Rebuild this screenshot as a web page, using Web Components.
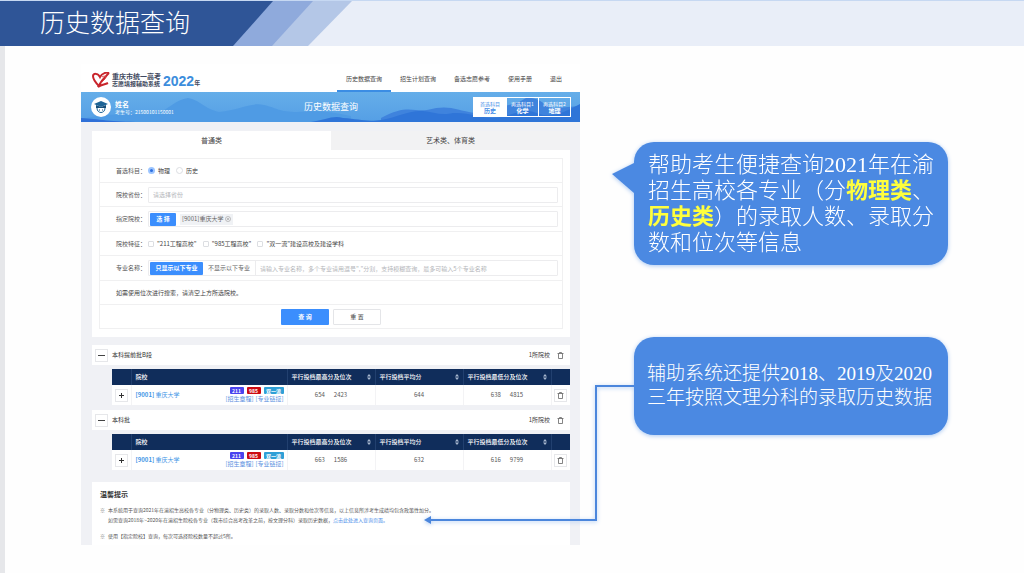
<!DOCTYPE html>
<html lang="zh-CN">
<head>
<meta charset="utf-8">
<title>历史数据查询</title>
<style>
  html, body { margin: 0; background: #fefefe; }
  body { font-family: "Noto Sans CJK SC", sans-serif; color: #444; }
</style>
</head>
<body>
<guide-slide>
  <slide-title slot="title">历史数据查询</slide-title>
  <query-site slot="demo"></query-site>
  <call-out slot="notes" kind="bubble">帮助考生便捷查询2021年在渝招生高校各专业（分<b>物理类</b>、<b>历史类</b>）的录取人数、录取分数和位次等信息</call-out>
  <call-out slot="notes" kind="linked">辅助系统还提供2018、2019及2020三年按照文理分科的录取历史数据</call-out>
</guide-slide>

<script>
const base = `<style>
  *, *::before, *::after { box-sizing: border-box; }
  button, input { font: inherit; color: inherit; margin: 0; padding: 0; }
  a { color: inherit; text-decoration: none; }
  svg { display: block; }
</style>`;

function define(name, render) {
  customElements.define(name, class extends HTMLElement {
    constructor() {
      super();
      this.attachShadow({ mode: 'open' });
    }
    connectedCallback() {
      const t = document.createElement('template');
      t.innerHTML = base + render(this);
      this.shadowRoot.replaceChildren(t.content.cloneNode(true));
    }
  });
}

/* Slide frame: title band, demo on the left, notes on the right */
define('guide-slide', () => `
<style>
  :host { display: flex; flex-direction: column; min-height: 100vh; box-sizing: border-box; }
  main {
    flex: 1; display: grid; grid-template-columns: 499fr 314fr; column-gap: 54px;
    align-items: start; padding: 18px 76px 0 76px; border-left: 5px solid #e6e7ea;
  }
  .notes { display: flex; flex-direction: column; gap: 72px; padding-top: 78px; }
</style>
<slot name="title"></slot>
<main>
  <slot name="demo"></slot>
  <div class="notes"><slot name="notes"></slot></div>
</main>`);

define('slide-title', () => `
<style>
  :host { display: block; position: relative; height: 46px; background: #e9eef8; border-top: 1px solid #c6d8f2; box-sizing: border-box; }
  svg { position: absolute; left: 0; top: 0; }
  h1 { position: relative; margin: 0; padding-left: 40px; font-size: 25px; line-height: 40px; font-weight: 300; color: #fff; }
</style>
<svg width="352" height="45" viewBox="0 0 352 45" aria-hidden="true">
  <path d="M0 0H352L308 45H0Z" fill="#b4c7e7"/>
  <path d="M0 0H313L272 45H0Z" fill="#8faadc"/>
  <path d="M0 0H273L233 45H0Z" fill="#2f5597"/>
</svg>
<h1><slot></slot></h1>`);

define('call-out', el => {
  const bubble = el.getAttribute('kind') === 'bubble';
  return `
<style>
  :host {
    display: flex; align-items: center; position: relative; box-sizing: border-box;
    border-radius: 20px; background: #4b89e2; color: #fff; font-weight: 300;
    font-family: "Liberation Serif", "Noto Sans CJK SC", serif;
    filter: drop-shadow(0 1px 2px #a9c8f2);
  }
  :host([kind=bubble]) { min-height: 123px; padding: 0 8px 0 14px; font-size: 22px; line-height: 26px; }
  :host([kind=linked]) { min-height: 98px; padding: 0 13px; font-size: 19px; line-height: 24px; }
  ::slotted(b) { color: #ffff3c; font-weight: 700; }
  svg { position: absolute; right: 100%; }
  .tail { top: 20px; }
  .wire { top: 48px; }
</style>
${bubble
  ? `<svg class="tail" width="22" height="32" viewBox="0 0 22 32" aria-hidden="true"><path d="M22 1L0 12L22 31Z" fill="#4b89e2"/></svg>`
  : `<svg class="wire" width="210" height="140" viewBox="0 0 210 140" aria-hidden="true"><path d="M210 1H172V135H6" fill="none" stroke="#4b86dc" stroke-width="2"/><path d="M0 135L7 131V139Z" fill="#4b86dc"/></svg>`}
<div><slot></slot></div>`;
});

/* The query site shown in the slide */
define('query-site', () => `
<style>
  :host { display: block; background: #f0f1f5; font-size: 6px; line-height: 10px; color: #444; }
  .body { padding: 9px 10px 0 11px; display: flex; flex-direction: column; }
  query-form { margin-bottom: 8px; }
  result-group { margin-bottom: 5px; }
  tips-card { margin-top: 7px; }
</style>
<site-nav></site-nav>
<student-banner></student-banner>
<div class="body">
  <query-form></query-form>
  <result-group name="本科提前批B段" high="654,2423" avg="644" low="638,4815"></result-group>
  <result-group name="本科批" high="663,1586" avg="632" low="616,9799"></result-group>
  <tips-card></tips-card>
</div>`);

define('site-nav', () => `
<style>
  :host { display: flex; justify-content: space-between; height: 28px; padding: 0 9px 0 11px; background: #fff; }
  .logo { display: flex; align-items: center; gap: 2px; padding-top: 5px; color: #3f4a60; }
  .name { font-weight: 700; font-size: 6px; line-height: 8px; }
  .name div:first-child { font-size: 7px; line-height: 7px; }
  .year { font: 700 14px/14px "Liberation Sans", sans-serif; color: #3c8ddc; }
  .unit { font-weight: 700; padding-top: 5px; margin-left: -2px; }
  nav { display: flex; }
  a { padding: 4px 9px 0; line-height: 22px; border-bottom: 2px solid transparent; white-space: nowrap; }
  a.on { border-color: #3b8de4; }
</style>
<div class="logo">
  <svg width="18" height="17" viewBox="0 0 18 17" aria-hidden="true">
    <path d="M7 14C4 11 1 7 1 4C1 1 6 1 8 5C10 1 15 0 17 1" fill="none" stroke="#c9252c" stroke-width="2"/>
    <path d="M17 1C14 4 10 7 6 15C10 12 12 13 16 11" fill="none" stroke="#c9252c" stroke-width="2"/>
    <path d="M10 5C13 3 15 5 13 7L9 11" fill="none" stroke="#d9474b" stroke-width="1"/>
  </svg>
  <div class="name"><div>重庆市统一高考</div><div>志愿填报辅助系统</div></div>
  <span class="year">2022</span><span class="unit">年</span>
</div>
<nav>
  <a class="on" href="#history">历史数据查询</a><a href="#plan">招生计划查询</a><a href="#ref">备选志愿参考</a><a href="#manual">使用手册</a><a href="#exit">退出</a>
</nav>`);

define('student-banner', () => `
<style>
  :host { display: grid; grid-template-columns: 1fr auto 1fr; align-items: center; position: relative; height: 30px; padding: 0 9px 0 10px; color: #fff; background: linear-gradient(#65aee9, #559fe5); }
  .hills { position: absolute; inset: 0; width: 100%; height: 100%; }
  .who, h2, .subjects { position: relative; }
  .who { display: flex; align-items: center; gap: 4px; }
  .who b { display: block; font-size: 7px; line-height: 8px; }
  .who small { display: block; font-size: 5px; line-height: 7px; }
  h2 { margin: 0; font-size: 9px; line-height: 12px; font-weight: 400; }
  .subjects { justify-self: end; display: flex; border: 1px solid #fff; height: 20px; text-align: center; }
  .subjects div { width: 32px; padding-top: 2px; font-size: 5px; line-height: 7px; border-left: 1px solid #fff; }
  .subjects div:first-child { background: #fff; color: #4a8fe8; border: 0; }
  .subjects b { display: block; font-size: 6px; line-height: 8px; }
</style>
<svg class="hills" viewBox="0 0 499 30" preserveAspectRatio="none" aria-hidden="true">
  <path d="M0 27C30 20 50 23 75 22C90 16 94 8 107 6C119 8 122 16 138 20C158 18 170 10 183 13C196 16 198 20 216 20C240 18 250 20 270 24V30H0Z" fill="#4f9be4"/>
  <path d="M300 26C325 12 333 20 346 18C368 12 374 18 394 21C410 14 430 16 445 6C460 4 466 18 475 16L499 14V30H300Z" fill="#3f83dd"/>
  <path d="M230 30C244 28 252 23 262 26C278 27 285 30 300 28C320 24 328 18 342 19C352 20 360 24 372 21C392 20 400 28 420 25C440 20 446 16 458 22C472 26 484 20 499 12V30Z" fill="#2f75d8"/>
  <path d="M0 26C18 27 30 30 60 30H0Z" fill="#2f70d8"/>
</svg>
<div class="who">
  <svg width="20" height="20" viewBox="0 0 20 20" aria-hidden="true">
    <circle cx="10" cy="10" r="10" fill="#fff"/>
    <path d="M3 7L10 4L17 7L10 10Z" fill="#1e6496"/>
    <path d="M5 8V11H15V8L10 10Z" fill="#174f7a"/>
    <path d="M6 11C6 17 14 17 14 11" fill="#fff" stroke="#1e6496" stroke-width="1"/>
    <path d="M8 13H9M11 13H12" stroke="#174f7a"/>
  </svg>
  <div><b>姓名</b><small>考生号：21500101150001</small></div>
</div>
<h2>历史数据查询</h2>
<div class="subjects">
  <div>首选科目<b>历史</b></div><div>再选科目1<b>化学</b></div><div>再选科目2<b>地理</b></div>
</div>`);

define('query-form', () => `
<style>
  :host { display: block; background: #fff; }
  .tabs { display: flex; }
  .tabs button { flex: 1; height: 19px; border: 0; background: #f2f2f3; font-size: 7px; line-height: 19px; }
  .tabs button.on { background: #fff; }
  form { display: grid; grid-template-rows: 24px 24px 25px 24px 25px 24px 24px; margin: 8px 7px 0; border: 1px solid #f0f0f1; border-bottom: 0; }
  .row { display: flex; align-items: center; padding: 0 4px 0 16px; border-bottom: 1px solid #f0f0f1; white-space: nowrap; }
  .cap { flex: none; width: 32px; color: #555; }
  .opts { display: flex; align-items: center; gap: 6px; }
  .opts label { display: flex; align-items: center; gap: 3px; }
  .opts input { appearance: none; width: 6px; height: 6px; border: 1px solid #dcdee2; background: #fff; border-radius: 1px; }
  .opts input[type=radio] { width: 7px; height: 7px; border-radius: 50%; }
  .opts input[type=radio]:checked { border: 2px solid #9cc5ff; background: #2d6fe0; }
  .field { flex: 1; min-width: 0; height: 16px; border: 1px solid #ececee; border-radius: 1px; background: #fff; }
  input.field, .field input { padding: 0 4px; outline: 0; }
  ::placeholder { color: #b4b6ba; opacity: 1; }
  .group { display: flex; align-items: center; padding: 0 1px; gap: 4px; }
  .group input { flex: 1; min-width: 0; height: 14px; border: 0; border-left: 1px solid #ececee; }
  .group button { height: 13px; border: 0; background: none; }
  button.main, .group button.main { border: 0; border-radius: 1px; background: #3b8efd; color: #fff; font-weight: 700; }
  .pick { width: 26px; }
  .only { width: 53px; }
  .except { width: 44px; color: #666; }
  .tag { display: flex; align-items: center; gap: 2px; height: 11px; padding: 0 2px; background: #f0f2f5; color: #666; }
  .actions { justify-content: center; gap: 4px; padding: 0; }
  .actions button { width: 48px; height: 16px; }
  .plain { border: 1px solid #e4e5e8; border-radius: 1px; background: #fff; }
  .end { height: 8px; }
</style>
<div class="tabs"><button class="on">普通类</button><button>艺术类、体育类</button></div>
<form>
  <div class="row"><span class="cap">首选科目：</span><div class="opts">
    <label><input type="radio" name="s" checked>物理</label><label><input type="radio" name="s">历史</label></div></div>
  <div class="row"><label class="cap" for="prov">院校省份：</label><input class="field" id="prov" placeholder="请选择省份"></div>
  <div class="row"><span class="cap">指定院校：</span><div class="field group"><button type="button" class="main pick">选 择</button>
    <span class="tag">[9001]重庆大学
      <svg width="6" height="6" viewBox="0 0 6 6" aria-hidden="true"><circle cx="3" cy="3" r="2.5" fill="none" stroke="#999" stroke-width=".6"/><path d="M2 2L4 4M4 2L2 4" stroke="#999" stroke-width=".6"/></svg></span></div></div>
  <div class="row"><span class="cap">院校特征：</span><div class="opts">
    <label><input type="checkbox">"211工程高校"</label><label><input type="checkbox">"985工程高校"</label><label><input type="checkbox">"双一流"建设高校及建设学科</label></div></div>
  <div class="row"><label class="cap" for="major">专业名称：</label><div class="field group"><button type="button" class="main only">只显示以下专业</button><button type="button" class="except">不显示以下专业</button><input id="major" placeholder='请输入专业名称，多个专业请用逗号","分割，支持模糊查询，最多可输入5个专业名称'></div></div>
  <div class="row">如需使用位次进行搜索，请清空上方所选院校。</div>
  <div class="row actions"><button type="button" class="main">查 询</button><button type="button" class="plain">重 置</button></div>
</form>
<div class="end"></div>`);

const bin = `<svg width="7" height="7" viewBox="0 0 7 7" aria-hidden="true"><path d="M.5 1.5H6.5M2.5 1.5V.5H4.5V1.5M1.5 1.5V6.5H5.5V1.5" fill="none" stroke="#666" stroke-width=".8"/></svg>`;
const sort = `<svg width="4" height="6" viewBox="0 0 4 6" aria-hidden="true"><path d="M0 2.5L2 0L4 2.5ZM0 3.5L2 6L4 3.5Z" fill="#a9b8d0"/></svg>`;
const pair = v => `<div class="pair">${v.split(',').map(n => `<span>${n}</span>`).join('')}</div>`;

define('result-group', el => `
<style>
  :host { display: block; }
  header { display: flex; align-items: center; height: 20px; padding: 0 6px 0 3px; gap: 4px; background: #fff; margin-bottom: 4px; }
  h3 { flex: 1; margin: 0; font-size: 6px; font-weight: 400; color: #333; }
  button { display: grid; place-items: center; width: 13px; height: 13px; border: 1px solid #e6e7ea; background: #fff; }
  header button:last-child { width: 8px; border: 0; background: none; margin-left: 2px; }
  .wrap { padding-left: 20px; }
  table { width: 100%; table-layout: fixed; border-collapse: collapse; background: #fff; }
  th { height: 16px; padding: 0 4px; background: #102d5b; color: #fff; font-weight: 500; text-align: left; white-space: nowrap; }
  th + th { border-left: 1px solid #22406f; }
  th div { display: flex; align-items: center; justify-content: space-between; }
  td { height: 20px; padding: 0; color: #555; }
  td + td { border-left: 1px solid #f3f3f5; }
  td button { margin: 0 auto; }
  .pair { display: flex; justify-content: center; gap: 9px; }
  .school { display: flex; align-items: center; justify-content: space-between; padding: 0 3px 0 4px; color: #3f96e6; white-space: nowrap; }
  .side { display: flex; flex-direction: column; align-items: flex-end; }
  .badges { display: flex; gap: 3px; }
  .badges i { min-width: 14px; padding: 0 2px; border-radius: 1px; font: 700 5px/7px "Noto Sans CJK SC", sans-serif; color: #fff; text-align: center; background: #4a43ee; }
  .badges i:nth-child(2) { background: #cc0a12; }
  .badges i:nth-child(3) { background: #2f9fd6; min-width: 20px; }
  .links { display: flex; gap: 2px; color: #5a8fe0; line-height: 9px; }
</style>
<header>
  <button aria-label="收起"><svg width="7" height="7" viewBox="0 0 7 7"><path d="M0 3.5H7" stroke="#444"/></svg></button>
  <h3>${el.getAttribute('name')}</h3><span>1所院校</span><button aria-label="删除">${bin}</button>
</header>
<div class="wrap"><table>
  <colgroup><col style="width:19px"><col><col style="width:88px"><col style="width:88px"><col style="width:88px"><col style="width:19px"></colgroup>
  <thead><tr><th></th><th>院校</th><th><div>平行投档最高分及位次${sort}</div></th><th><div>平行投档平均分${sort}</div></th><th><div>平行投档最低分及位次${sort}</div></th><th></th></tr></thead>
  <tbody><tr>
    <td><button aria-label="展开"><svg width="5" height="5" viewBox="0 0 5 5"><path d="M0 2.5H5M2.5 0V5" stroke="#333"/></svg></button></td>
    <td><div class="school"><a href="#school"><b>[9001]</b> 重庆大学</a><div class="side"><div class="badges"><i>211</i><i>985</i><i>双一流</i></div><div class="links"><a href="#rules">[招生章程]</a><a href="#majors">[专业链接]</a></div></div></div></td>
    <td>${pair(el.getAttribute('high'))}</td><td>${pair(el.getAttribute('avg'))}</td><td>${pair(el.getAttribute('low'))}</td>
    <td><button aria-label="删除">${bin}</button></td>
  </tr></tbody>
</table></div>`);

define('tips-card', () => `
<style>
  :host { display: block; padding: 7px 8px 4px; background: #fff; }
  h3 { margin: 0 0 6px; font-size: 7px; line-height: 10px; font-weight: 700; color: #333; }
  ul { margin: 0; padding: 0; list-style: none; font-size: 5px; line-height: 10px; color: #555; }
  li { display: flex; gap: 3px; white-space: nowrap; }
  li + li { margin-top: 6px; }
  li::before { content: "※"; color: #777; }
  a { color: #4d90ea; }
</style>
<h3>温馨提示</h3>
<ul>
  <li><div>本系统用于查询2021年在渝招生高校各专业（分物理类、历史类）的录取人数、录取分数和位次等信息，以上信息所涉考生成绩均包含政策性加分。<br>如需查询2018年~2020年在渝招生院校各专业（我市综合高考改革之前，按文理分科）录取历史数据，<a href="#old">点击此处进入查询页面。</a></div></li>
  <li><div>使用【指定院校】查询，每次可选择院校数量不超过5所。</div></li>
</ul>`);
</script>
</body>
</html>
